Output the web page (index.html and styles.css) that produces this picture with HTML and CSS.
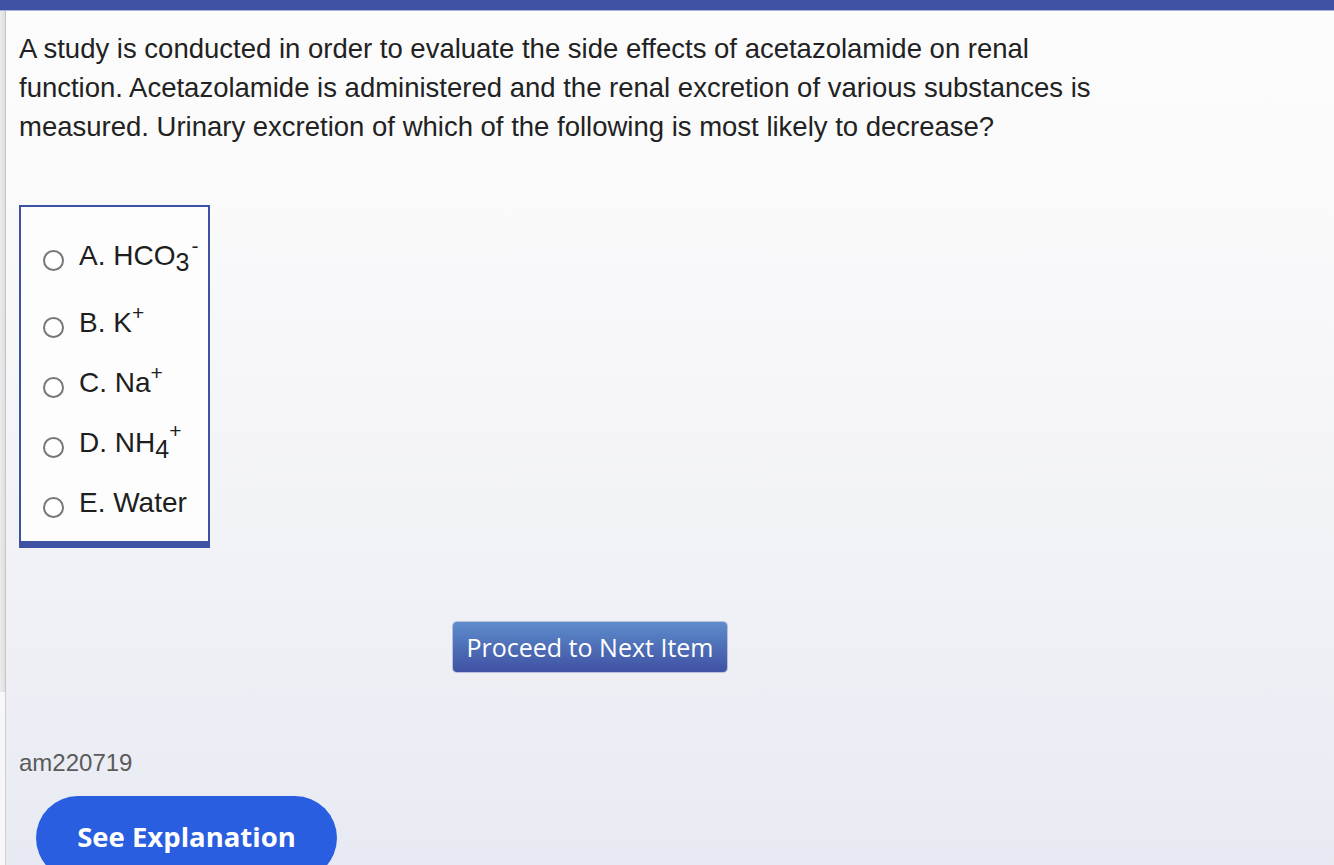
FILE: index.html
```html
<!DOCTYPE html>
<html>
<head>
<meta charset="utf-8">
<link rel="stylesheet" href="styles.css">
</head>
<body>
<div class="topbar"></div>
<div class="layout">
  <div class="strip">
    <div class="strip-top"></div>
    <div class="strip-bottom"></div>
  </div>
  <main class="main">
    <p class="question">A study is conducted in order to evaluate the side effects of acetazolamide on renal function. Acetazolamide is administered and the renal excretion of various substances is measured. Urinary excretion of which of the following is most likely to decrease?</p>
    <div class="options">
      <div class="option option-first"><span class="radio"></span><span class="label">A. HCO<span class="sub">3</span><span class="sup minus">-</span></span></div>
      <div class="option"><span class="radio"></span><span class="label">B. K<span class="sup">+</span></span></div>
      <div class="option"><span class="radio"></span><span class="label">C. Na<span class="sup">+</span></span></div>
      <div class="option"><span class="radio"></span><span class="label">D. NH<span class="sub">4</span><span class="sup plus-after">+</span></span></div>
      <div class="option"><span class="radio"></span><span class="label">E. Water</span></div>
    </div>
    <button class="next-btn">Proceed to Next Item</button>
    <div class="item-id">am220719</div>
    <button class="explain-btn">See Explanation</button>
  </main>
</div>
</body>
</html>
```

FILE: styles.css
```css
html, body {
  margin: 0;
  padding: 0;
  height: 100%;
  overflow: hidden;
}
body {
  background: linear-gradient(to bottom, #fcfcfc 0px, #fafafb 200px, #f0f1f6 600px, #e8eaf3 865px);
  font-family: "Liberation Sans", Arial, sans-serif;
  color: #222;
}
.topbar {
  height: 10px;
  background: #3f51a3;
  border-bottom: 1px solid #a9b3d6;
}
.layout {
  display: flex;
}
.strip {
  width: 6px;
  flex: none;
  display: flex;
  flex-direction: column;
}
.strip-top {
  height: 681px;
  background: linear-gradient(to right, #ececec, #dedede);
  border-right: 1px solid #c6c6c6;
  box-sizing: border-box;
}
.strip-bottom {
  height: 200px;
  background: #f7f7f8;
  border-right: 1px solid #cfcfcf;
  box-sizing: border-box;
}
.main {
  flex: 1;
  padding-left: 13px;
}
.question {
  margin: 18px 0 0 0;
  font-size: 27.5px;
  line-height: 39px;
  color: #222;
  max-width: 1100px;
}
.options {
  margin-top: 59px;
  width: 187px;
  border: 2px solid #3f51a3;
  border-bottom: 7px solid #3f51a3;
  background: #fdfdfd;
  padding: 19px 0 8px 0;
}
.option {
  display: flex;
  align-items: center;
  height: 60px;
  padding-left: 22px;
}
.option-first {
  margin-bottom: 7px;
}
.radio {
  width: 17px;
  height: 17px;
  border: 2px solid #777;
  border-radius: 50%;
  background: #fff;
  margin-top: 8px;
  flex: none;
}
.label {
  margin-left: 15px;
  font-size: 28px;
  line-height: 60px;
  color: #1e1e1e;
  white-space: nowrap;
}
.sub {
  font-size: 25px;
  line-height: 0;
  position: relative;
  top: 6px;
}
.sup {
  font-size: 21px;
  line-height: 0;
  position: relative;
  top: -12px;
}
.minus {
  margin-left: 2px;
}
.plus-after {
  top: -14px;
}
.next-btn {
  display: block;
  margin: 74px 0 0 434px;
  width: 274px;
  height: 50px;
  padding: 0;
  border: none;
  border-radius: 4px;
  background: linear-gradient(to bottom, #5e8ccb, #3f51a3);
  color: #fff;
  font-family: "Open Sans", sans-serif;
  font-size: 25px;
  font-weight: 400;
  box-shadow: 0 0 0 1px rgba(63, 81, 163, 0.3);
}
.item-id {
  margin-top: 77px;
  font-size: 24px;
  color: #5a5a5a;
}
.explain-btn {
  display: block;
  margin: 19px 0 0 17px;
  width: 301px;
  height: 84px;
  padding: 0 0 4px 0;
  border: none;
  border-radius: 42px;
  background: #2a5ee0;
  color: #fff;
  font-family: "Open Sans", sans-serif;
  font-size: 27.5px;
  font-weight: 700;
}
```
